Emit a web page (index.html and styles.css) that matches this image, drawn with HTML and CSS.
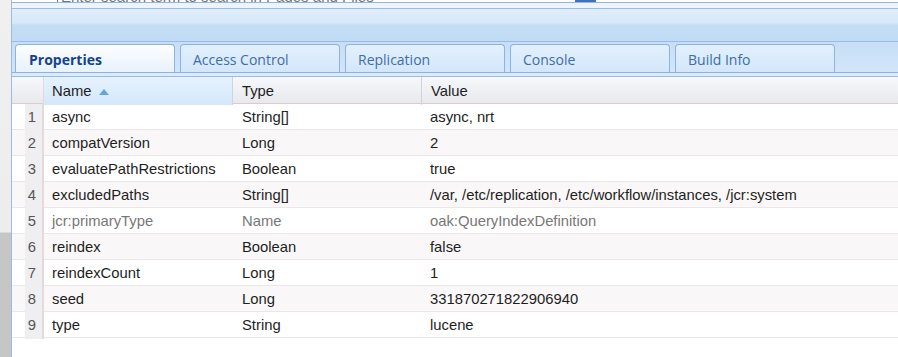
FILE: index.html
```html
<!DOCTYPE html>
<html>
<head>
<meta charset="utf-8">
<link rel="stylesheet" href="styles.css">
</head>
<body>
<div class="page">
  <div class="gutter"></div>
  <div class="main">
    <div class="search">
      <div class="search-box">
        <div class="search-text"><span>Enter search term to search in Pages and Files</span></div>
        <div class="search-btn"></div>
      </div>
    </div>
    <div class="titlebar"></div>
    <div class="tabstrip">
      <div class="tabs">
        <div class="tab active">Properties</div>
        <div class="tab">Access Control</div>
        <div class="tab">Replication</div>
        <div class="tab">Console</div>
        <div class="tab">Build Info</div>
      </div>
    </div>
    <div class="tabgap"></div>
    <div class="grid">
      <div class="hrow">
        <div class="hc num"></div>
        <div class="hc sorted">Name <svg class="arrow" width="10" height="6" viewBox="0 0 10 6"><path d="M0 6 L5 0 L10 6 Z" fill="#66a3dc"/></svg></div>
        <div class="hc">Type</div>
        <div class="hc last">Value</div>
      </div>
      <div class="row"><div class="num"><span>1</span></div><div class="c">async</div><div class="c">String[]</div><div class="c">async, nrt</div></div>
      <div class="row alt"><div class="num"><span>2</span></div><div class="c">compatVersion</div><div class="c">Long</div><div class="c">2</div></div>
      <div class="row"><div class="num"><span>3</span></div><div class="c">evaluatePathRestrictions</div><div class="c">Boolean</div><div class="c">true</div></div>
      <div class="row alt"><div class="num"><span>4</span></div><div class="c">excludedPaths</div><div class="c">String[]</div><div class="c">/var, /etc/replication, /etc/workflow/instances, /jcr:system</div></div>
      <div class="row protected"><div class="num"><span>5</span></div><div class="c">jcr:primaryType</div><div class="c">Name</div><div class="c">oak:QueryIndexDefinition</div></div>
      <div class="row alt"><div class="num"><span>6</span></div><div class="c">reindex</div><div class="c">Boolean</div><div class="c">false</div></div>
      <div class="row"><div class="num"><span>7</span></div><div class="c">reindexCount</div><div class="c">Long</div><div class="c">1</div></div>
      <div class="row alt"><div class="num"><span>8</span></div><div class="c">seed</div><div class="c">Long</div><div class="c">331870271822906940</div></div>
      <div class="row"><div class="num"><span>9</span></div><div class="c">type</div><div class="c">String</div><div class="c">lucene</div></div>
    </div>
  </div>
</div>
</body>
</html>
```
FILE: styles.css
```css
html, body {
  margin: 0;
  padding: 0;
  background: #fff;
  height: 357px;
  overflow: hidden;
}
body {
  font-family: "Liberation Sans", Arial, sans-serif;
}
.page {
  display: flex;
  height: 357px;
}
.gutter {
  width: 11px;
  flex: none;
  background: linear-gradient(#f0f0f0 0, #ededed 232px, #c6c6c6 233px, #c6c6c6 100%);
}
.main {
  flex: 1;
  border-left: 1px solid #99bbe8;
  background: #fff;
  min-width: 0;
}
.search {
  height: 8px;
  background: #eef4fb;
}
.search-box {
  height: 2px;
  border-bottom: 1px solid #95b6dd;
  background: #fff;
  display: flex;
  overflow: hidden;
}
.search-text {
  flex: none;
  padding-left: 3px;
  box-sizing: border-box;
  border-left: 1px solid #6b7c90;
  margin-left: 45px;
  width: 518px;
  font-size: 15px;
  color: #6b7785;
  line-height: 14px;
}
.search-text span {
  display: block;
  margin-top: -10px;
  white-space: nowrap;
}
.search-btn {
  width: 21px;
  height: 2px;
  background: #3f6fbe;
}
.titlebar {
  height: 32px;
  border-top: 1px solid #99bbe8;
  border-bottom: 1px solid #99bbe8;
  background: linear-gradient(#e1eefb 0, #d6e8fa 14px, #c4ddf5 16px, #c0dbf4 100%);
}
.tabstrip {
  border-bottom: 1px solid #8db2e3;
  background: linear-gradient(#c7def6, #d2e6fa);
  box-sizing: border-box;
  padding-top: 2px;
  height: 31px;
}
.tabs {
  display: flex;
  gap: 5px;
  padding-left: 3px;
  height: 28px;
}
.tab {
  width: 160px;
  box-sizing: border-box;
  height: 28px;
  border: 1px solid #8db2e3;
  border-bottom: none;
  border-radius: 4px 4px 0 0;
  background: linear-gradient(#e3f0fc, #d3e7fb);
  font-family: "Open Sans", "Noto Sans", sans-serif;
  font-size: 14px;
  color: #3d6ea6;
  padding-left: 12px;
  line-height: 29px;
}
.tab.active {
  background: linear-gradient(#fdfeff, #e6f2fd);
  color: #15428b;
  font-weight: bold;
  padding-left: 13px;
}
.tabgap {
  height: 3px;
  background: #dcebfb;
  border-bottom: 1px solid #99bbe8;
}
.grid {
  font-size: 14.8px;
  color: #1e1e1e;
}
.hrow, .row {
  display: grid;
  grid-template-columns: 32px 189px 189px 1fr;
}
.hrow {
  height: 26px;
  border-bottom: 1px solid #d8ccd0;
  background: linear-gradient(#f7f8fa, #e7e9ed);
}
.hc {
  line-height: 28px;
  padding-left: 8px;
  border-right: 1px solid #d4d4d8;
  white-space: nowrap;
}
.hc.num {
  padding: 0;
  border-right: 1px solid #dcdcdf;
}
.hc.sorted {
  background: linear-gradient(#e6f2fd, #d3e8fa);
}
.hc + .hc + .hc {
  padding-left: 9px;
}
.hc.last {
  border-right: none;
  padding-left: 7px;
}
.arrow {
  margin-left: 3px;
  vertical-align: 1px;
}
.row {
  height: 25px;
  border-bottom: 1px solid #ebe6e8;
  background: #fff;
}
.row.alt {
  background: #f9f7f8;
}
.row.protected {
  color: #777;
}
.num {
  display: flex;
  padding-left: 13px;
  border-right: 2px solid #e5d9dd;
}
.num span {
  flex: 1;
  background: #efeff1;
  text-align: right;
  padding-right: 6px;
  line-height: 27px;
  color: #555;
}
.c {
  line-height: 27px;
  padding-left: 8px;
  white-space: nowrap;
}
.c + .c {
  padding-left: 9px;
}
.c + .c + .c {
  padding-left: 8px;
}
```
